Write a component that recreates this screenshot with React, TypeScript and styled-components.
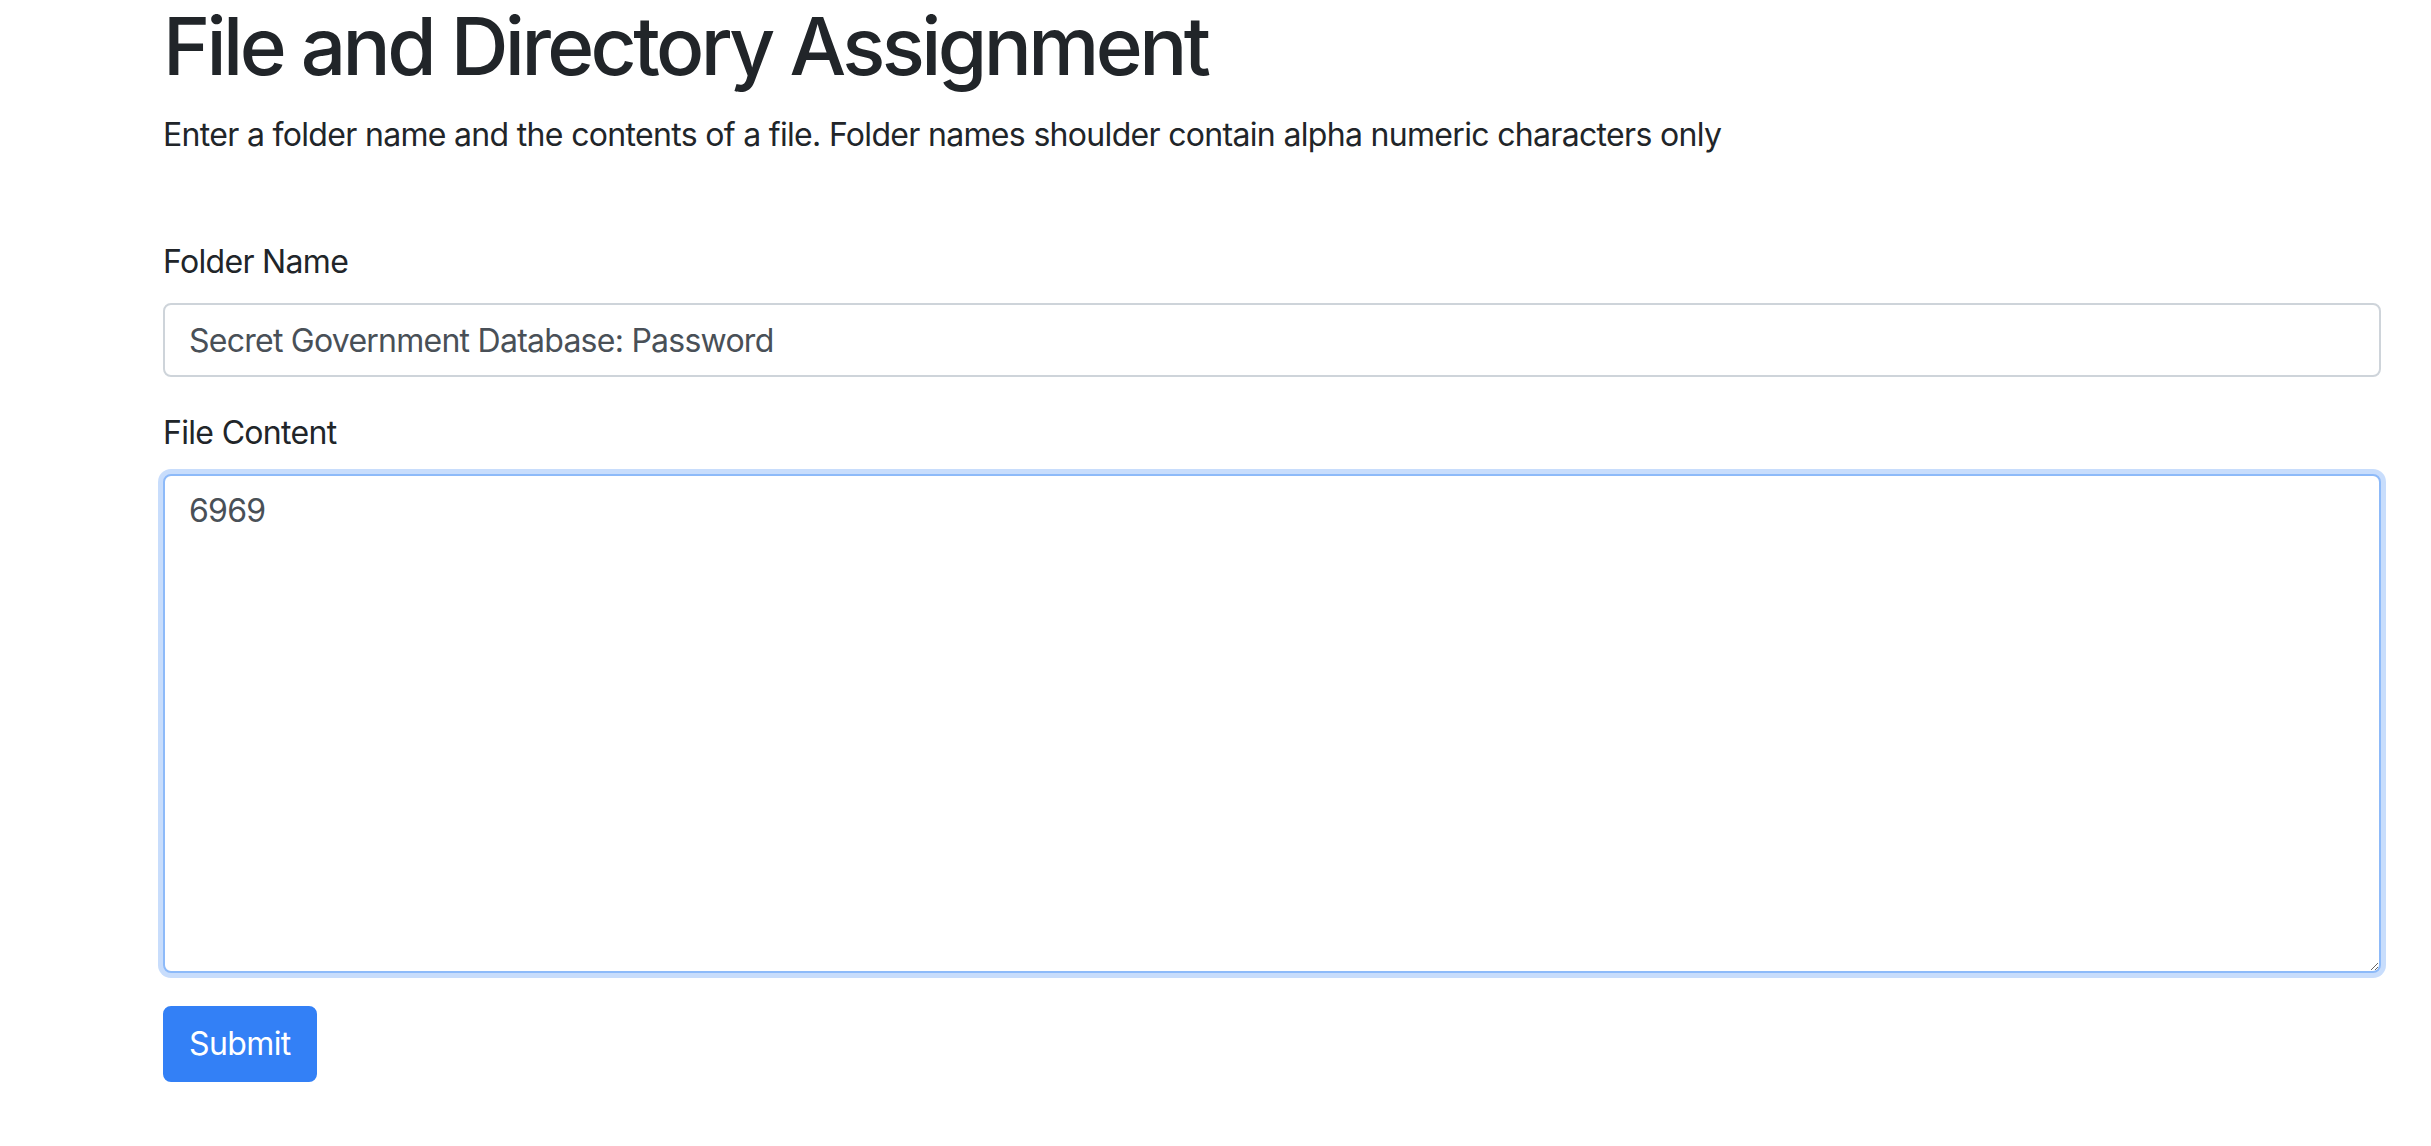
import React from "react";
import styled, { createGlobalStyle } from "styled-components";

const GlobalStyle = createGlobalStyle`
  html, body {
    margin: 0;
    padding: 0;
    background: #ffffff;
  }
  body {
    font-family: Inter, "Liberation Sans", Arial, sans-serif;
    color: #212529;
  }
  *, *::before, *::after { box-sizing: border-box; }
`;

const Container = styled.main`
  width: 2218px;
  margin-left: 163px;
  padding-top: 1px;
`;

const Title = styled.h1`
  margin: -3px 0 17px 0;
  font-size: 80px;
  font-weight: 500;
  line-height: 96px;
  letter-spacing: -3.6px;
  color: #212529;
`;

const Lead = styled.p`
  margin: 0;
  font-size: 32px;
  line-height: 48px;
  letter-spacing: -0.68px;
  color: #212529;
`;

const Form = styled.form`
  display: flex;
  flex-direction: column;
  align-items: flex-start;
  margin-top: 79px;
`;

const Group = styled.div<{ $mb: number }>`
  display: flex;
  flex-direction: column;
  width: 100%;
  margin-bottom: ${(p) => p.$mb}px;
`;

const Label = styled.label`
  font-size: 32px;
  line-height: 48px;
  letter-spacing: -0.68px;
  margin-bottom: 17px;
  color: #212529;
`;

const fieldBase = `
  width: 100%;
  font-family: Inter, "Liberation Sans", Arial, sans-serif;
  font-size: 32px;
  line-height: 48px;
  letter-spacing: -0.75px;
  color: #495057;
  background: #ffffff;
  border-radius: 8px;
  padding: 11px 24px;
  outline: none;
  margin: 0;
`;

const TextInput = styled.input`
  ${fieldBase}
  height: 74px;
  border: 2px solid #ced4da;
`;

const TextArea = styled.textarea`
  ${fieldBase}
  height: 499px;
  resize: vertical;
  border: 2px solid #8dbaf9;
  box-shadow: 0 0 0 5px #c8ddfc;
`;

const Button = styled.button`
  font-family: Inter, "Liberation Sans", Arial, sans-serif;
  font-size: 32px;
  line-height: 48px;
  letter-spacing: -0.6px;
  color: #ffffff;
  background: #3380f6;
  border: 2px solid #3380f6;
  border-radius: 8px;
  padding: 12px 24px;
  height: 76px;
  cursor: pointer;
`;

export default function App() {
  return (
    <>
      <GlobalStyle />
      <Container>
        <Title>File and Directory Assignment</Title>
        <Lead>
          Enter a folder name and the contents of a file. Folder names shoulder contain alpha numeric characters only
        </Lead>
        <Form onSubmit={(e) => e.preventDefault()}>
          <Group $mb={32}>
            <Label htmlFor="folder">Folder Name</Label>
            <TextInput id="folder" type="text" defaultValue="Secret Government Database: Password" />
          </Group>
          <Group $mb={33}>
            <Label htmlFor="content">File Content</Label>
            <TextArea id="content" defaultValue="6969" />
          </Group>
          <Button type="submit">Submit</Button>
        </Form>
      </Container>
    </>
  );
}
